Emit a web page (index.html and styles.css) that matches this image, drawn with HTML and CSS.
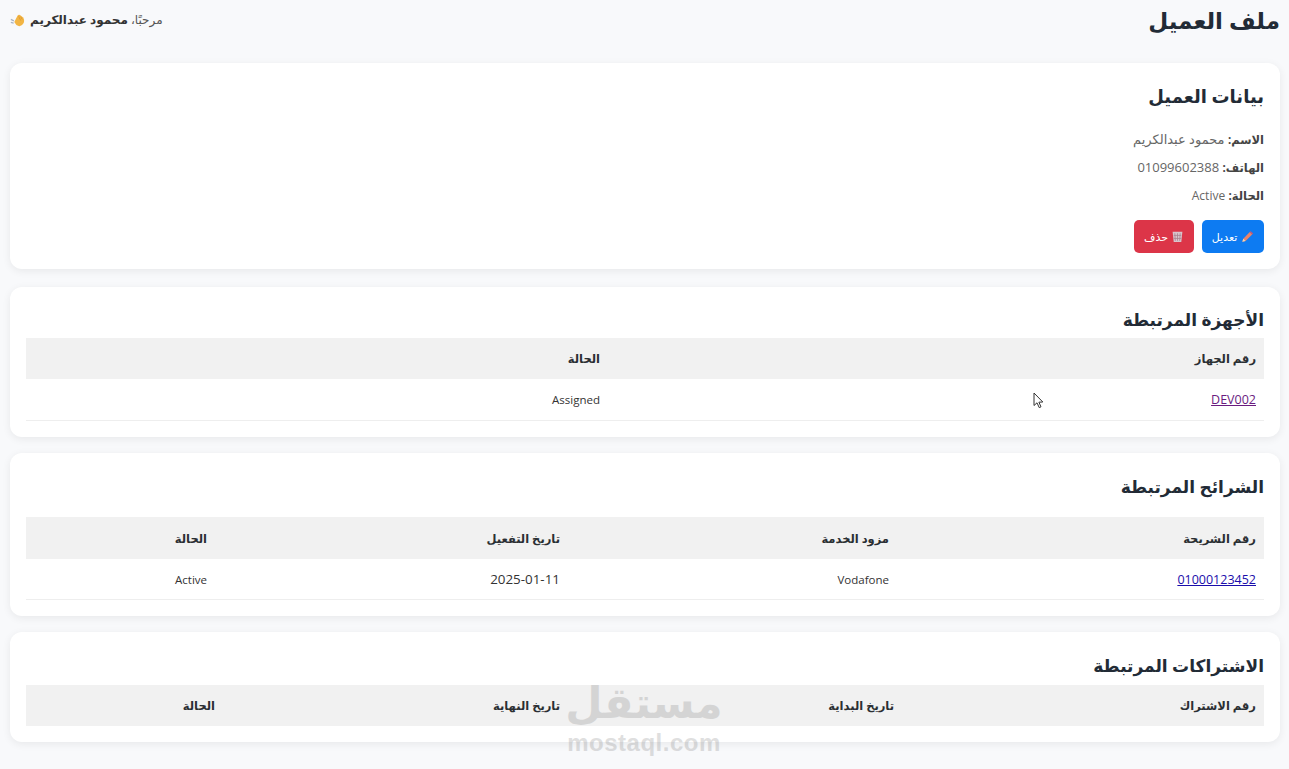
FILE: index.html
```html
<!DOCTYPE html>
<html lang="ar" dir="rtl">
  <head>
    <meta charset="UTF-8" />
    <meta name="viewport" content="width=device-width, initial-scale=1.0" />
    <title>ملف العميل</title>
    <link rel="stylesheet" href="styles.css">
  </head>
  <body>
    <header class="page-header">
      <h1>ملف العميل</h1>
      <div class="welcome">
        مرحبًا، <strong>محمود عبدالكريم</strong>
        <svg class="emoji" viewBox="0 0 14 14" width="15" height="15">
          <path d="M4 8.5 L7 2.6 Q8 1 9.3 1.8 L12 4 Q13.8 6 12.8 9.4 Q11 12.8 8 12.2 Q5.4 11.6 4 8.5Z" fill="#f2b544"/>
          <path d="M8 3 L10 7 M10 3.4 L11.4 6" stroke="#d8922c" stroke-width=".7" fill="none"/>
          <path d="M.8 6 L3.6 7.4 M.8 8.8 L3.4 9.4" stroke="#a9b4c4" stroke-width="1.3" fill="none"/>
        </svg>
      </div>
    </header>

    <section class="card card-info">
      <h2>بيانات العميل</h2>
      <p><strong>الاسم:</strong> محمود عبدالكريم</p>
      <p><strong>الهاتف:</strong> 01099602388</p>
      <p><strong>الحالة:</strong> <span class="latin">Active</span></p>
      <div class="actions">
        <a class="btn btn-blue" href="#">
          <svg viewBox="0 0 12 12" width="14" height="14">
            <path d="M2 10 L2.8 7.4 L8.4 1.8 L10.4 3.8 L4.8 9.4Z" fill="#e8836b"/>
            <path d="M2 10 L2.8 7.4 L4.8 9.4Z" fill="#f3d9b5"/>
            <path d="M8.4 1.8 L9.2 1 L11.2 3 L10.4 3.8Z" fill="#d5566a"/>
          </svg>
          تعديل
        </a>
        <a class="btn btn-red" href="#">
          <svg viewBox="0 0 12 12" width="13" height="13">
            <path d="M1.5 1.5 H10.5 L9.5 11 H2.5Z" fill="#d9c4cc"/>
            <path d="M3.5 3 L4 10 M6 3 V10 M8.5 3 L8 10 M2.5 5 H9.5 M2.5 7.8 H9.5" stroke="#a8808e" stroke-width=".7" fill="none"/>
          </svg>
          حذف
        </a>
      </div>
    </section>

    <section class="card card-devices">
      <h2>الأجهزة المرتبطة</h2>
      <table>
        <colgroup><col class="d1"><col class="d2"></colgroup>
        <thead>
          <tr><th>رقم الجهاز</th><th>الحالة</th></tr>
        </thead>
        <tbody>
          <tr><td><a class="visited" href="#">DEV002</a></td><td>Assigned</td></tr>
        </tbody>
      </table>
    </section>

    <section class="card card-sims">
      <h2>الشرائح المرتبطة</h2>
      <table>
        <colgroup><col class="s1"><col class="s2"><col class="s3"><col class="s4"></colgroup>
        <thead>
          <tr><th>رقم الشريحة</th><th>مزود الخدمة</th><th>تاريخ التفعيل</th><th>الحالة</th></tr>
        </thead>
        <tbody>
          <tr><td><a href="#">01000123452</a></td><td>Vodafone</td><td class="date">2025-01-11</td><td>Active</td></tr>
        </tbody>
      </table>
    </section>

    <section class="card card-subs">
      <h2>الاشتراكات المرتبطة</h2>
      <table>
        <colgroup><col class="p1"><col class="p2"><col class="p3"><col class="p4"></colgroup>
        <thead>
          <tr><th>رقم الاشتراك</th><th>تاريخ البداية</th><th>تاريخ النهاية</th><th>الحالة</th></tr>
        </thead>
      </table>
    </section>

    <div class="watermark">
      <div class="wm-ar">مستقل</div>
      <div class="wm-en">mostaql.com</div>
    </div>

    <svg class="cursor" viewBox="0 0 12 18" width="12" height="18">
      <path d="M1 1 L1 13.5 L4 10.8 L6.2 15.6 L8 14.8 L5.9 10.2 L9.8 10Z" fill="#fff" stroke="#333" stroke-width="1"/>
    </svg>
  </body>
</html>
```

FILE: styles.css
```css
* {
  box-sizing: border-box;
}
html,
body {
  height: 769px;
  overflow: hidden;
}
body {
  margin: 0;
  padding: 0 9px 0 10px;
  background: #f8f9fb;
  color: #2b2f33;
  font-family: "Open Sans", "DejaVu Sans", sans-serif;
  font-size: 12px;
  position: relative;
}
.page-header {
  display: flex;
  justify-content: space-between;
  align-items: flex-start;
  height: 63px;
}
h1 {
  margin: 4px 0 0;
  font-size: 23px;
  line-height: 32px;
  color: #222b36;
}
.welcome {
  margin-top: 11px;
  line-height: 18px;
  color: #555;
  display: flex;
  gap: 3px;
  align-items: center;
}
.welcome strong {
  color: #333;
}
.emoji {
  margin-right: 2px;
}
.card {
  background: #fff;
  border-radius: 12px;
  box-shadow: 0 2px 8px #00000012;
  padding: 0 16px;
  margin-bottom: 16px;
}
h2 {
  margin: 0;
  font-size: 17px;
  color: #222b36;
}
.card-info {
  height: 206px;
  padding-top: 19px;
  margin-bottom: 18px;
}
.card-info h2 {
  font-size: 18px;
  line-height: 28px;
  margin-bottom: 20px;
}
.card-info p {
  height: 18px;
  margin: 0 0 10px;
  line-height: 18px;
  font-size: 13px;
  color: #666;
}
.card-info strong {
  font-size: 11.5px;
  color: #444;
}
.card-info .latin {
  font-size: 12px;
}
.actions {
  display: flex;
  gap: 8px;
  margin-top: 16px;
}
.btn {
  display: flex;
  align-items: center;
  justify-content: center;
  gap: 3px;
  width: 62px;
  height: 33px;
  border-radius: 5px;
  color: #fff;
  font-size: 11px;
  text-decoration: none;
}
.btn-blue {
  background: #0d7bf2;
}
.btn-red {
  width: 60px;
  background: #dc3548;
}
.card-devices {
  height: 150px;
  padding-top: 18px;
}
.card-devices h2 {
  line-height: 29px;
  margin-bottom: 4px;
}
.card-sims {
  height: 163px;
  padding-top: 18px;
}
.card-sims h2 {
  line-height: 31px;
  margin-bottom: 15px;
}
.card-sims th {
  height: 42px;
}
.card-sims td {
  height: 41px;
}
.card-subs {
  height: 110px;
  padding-top: 18px;
  margin-bottom: 0;
}
.card-subs h2 {
  line-height: 31px;
  margin-bottom: 4px;
}
table {
  width: 100%;
  border-collapse: separate;
  border-spacing: 0;
  table-layout: fixed;
}
th,
td {
  padding: 0 8px;
  text-align: right;
}
th {
  height: 41px;
  background: #f1f1f1;
  color: #2b2f33;
  font-size: 11.5px;
  font-weight: bold;
}
td {
  height: 42px;
  border-bottom: 1px solid #eee;
  color: #333;
  font-size: 11.5px;
}
td.date {
  font-size: 13.4px;
}
td a {
  color: #1a0dab;
  font-size: 12.5px;
}
td a.visited {
  color: #6a1b7f;
}
.d1 { width: 656px; }
.s1 { width: 367px; }
.s2 { width: 329px; }
.s3 { width: 353px; }
.p1 { width: 362px; }
.p2 { width: 334px; }
.p3 { width: 345px; }
/* watermark and pointer sit over the page */
.watermark {
  position: absolute;
  left: 554px;
  top: 678px;
  width: 180px;
  text-align: center;
  color: #8a8a8a;
  opacity: 0.27;
  font-weight: bold;
  pointer-events: none;
}
.wm-ar {
  font-family: "DejaVu Sans", sans-serif;
  font-size: 43px;
  line-height: 50px;
}
.wm-en {
  margin-top: 5px;
  font-family: "Liberation Sans", sans-serif;
  font-size: 24px;
  letter-spacing: 0.5px;
  line-height: 20px;
}
.cursor {
  position: absolute;
  left: 1033px;
  top: 392px;
}
```
